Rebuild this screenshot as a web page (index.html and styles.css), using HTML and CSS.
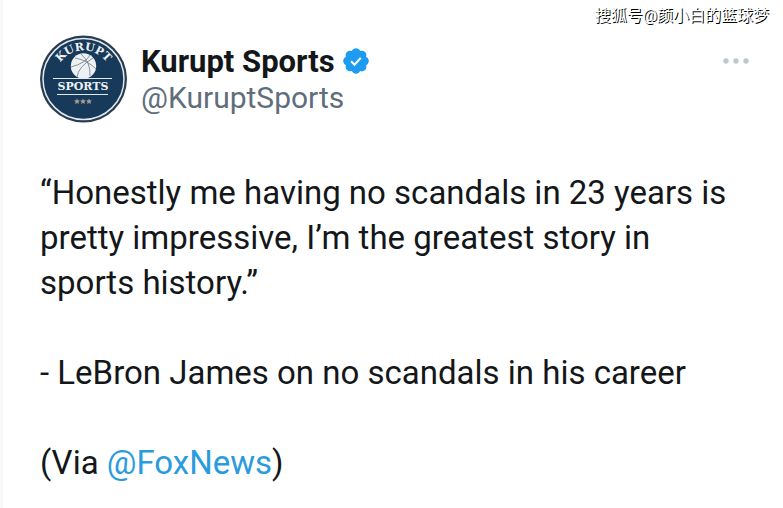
FILE: index.html
```html
<!DOCTYPE html>
<html lang="en">
<head>
    <meta charset="UTF-8">
    <meta name="viewport" content="width=device-width, initial-scale=1.0">
    <title>Kurupt Sports</title>
    <link rel="stylesheet" href="styles.css">
</head>
<body>

<article class="post">
    <header class="post-header">
        <svg class="avatar" viewBox="0 0 88 88" role="img" aria-label="Kurupt Sports logo">
            <defs>
                <path id="arc" d="M15 44 A28.500 28.500 0 0 1 72 44"/>
            </defs>
            <circle cx="43.500" cy="44" r="43.500" fill="#2b3b4c"/>
            <circle cx="43.500" cy="44" r="40.500" fill="#17395a" stroke="#dfe9f1" stroke-width="1.500"/>
            <text class="logo-arc"><textPath href="#arc" startOffset="50%" text-anchor="middle">KURUPT</textPath></text>
            <circle cx="43.500" cy="31" r="12.700" fill="#eef1f3"/>
            <g fill="none" stroke="#6b7986" stroke-width="0.800">
                <path d="M31 32Q46 28 50 20"/>
                <path d="M37 42Q38 32 53 23"/>
                <path d="M41 19Q51 28 50 41"/>
                <path d="M35 23Q47 25 56 34"/>
            </g>
            <path d="M14 44H73V59H14z" fill="#17395a"/>
            <path d="M13 43.500H72M17 59.500H68" stroke="#dfe9f1" stroke-width="1.200"/>
            <text class="logo-name" x="43" y="55" text-anchor="middle">SPORTS</text>
            <g fill="#a39c91">
                <path d="M37 63.500l.9 1.700 2 .3-1.400 1.400.3 2-1.800-.9-1.800.9.3-2-1.400-1.400 2-.3z"/>
                <path d="M43 63.500l.9 1.700 2 .3-1.400 1.400.3 2-1.800-.9-1.800.9.3-2-1.400-1.400 2-.3z"/>
                <path d="M49 63.500l.9 1.700 2 .3-1.400 1.400.3 2-1.800-.9-1.800.9.3-2-1.400-1.400 2-.3z"/>
            </g>
        </svg>
        <div class="author">
            <div class="name-row">
                <span class="name">Kurupt Sports</span>
                <svg class="verified" viewBox="0 0 22 22" role="img" aria-label="Verified">
                    <path fill="#1d9bf0" d="M20.396 11c-.018-.646-.215-1.275-.57-1.816-.354-.54-.852-.972-1.438-1.246.223-.607.27-1.264.14-1.897-.131-.634-.437-1.218-.882-1.687-.47-.445-1.053-.75-1.687-.882-.633-.13-1.290-.083-1.897.14-.273-.587-.704-1.086-1.245-1.440S11.647 1.620 11 1.604c-.646.017-1.273.213-1.813.568s-.969.854-1.240 1.440c-.608-.223-1.267-.272-1.902-.14-.635.13-1.220.436-1.690.882-.445.47-.749 1.055-.878 1.688-.13.633-.08 1.290.144 1.896-.587.274-1.087.705-1.443 1.245-.356.54-.555 1.170-.574 1.817.02.647.218 1.276.574 1.817.356.54.856.972 1.443 1.245-.224.606-.274 1.263-.144 1.896.13.634.433 1.218.877 1.688.47.443 1.054.747 1.687.878.633.132 1.290.084 1.897-.136.274.586.705 1.084 1.246 1.439.54.354 1.170.551 1.816.569.647-.016 1.276-.213 1.817-.567s.972-.854 1.245-1.440c.604.239 1.266.296 1.903.164.636-.132 1.220-.447 1.680-.907.46-.46.776-1.044.908-1.681s.075-1.299-.165-1.903c.586-.274 1.084-.705 1.439-1.246.354-.54.551-1.170.569-1.816z"/>
                    <path fill="none" stroke="#fff" stroke-width="1.500" d="M7.400 11.200l2.500 2.500 4.600-5"/>
                </svg>
            </div>
            <a class="handle" href="#">@KuruptSports</a>
        </div>
        <button class="more" aria-label="More">
            <svg viewBox="0 0 26 6" width="26" height="6" fill="#bfc7ce">
                <circle cx="3" cy="3" r="2.700"/>
                <circle cx="13" cy="3" r="2.700"/>
                <circle cx="23" cy="3" r="2.700"/>
            </svg>
        </button>
    </header>

    <div class="post-text">
        <p>“Honestly me having no scandals in 23 years is pretty impressive, I’m the greatest story in sports history.”</p>
        <p>- LeBron James on no scandals in his career</p>
        <p>(Via <a href="#">@FoxNews</a>)</p>
    </div>
</article>

<div class="watermark" lang="zh">搜狐号@颜小白的篮球梦</div>

</body>
</html>
```

FILE: styles.css
```css
body {
    margin: 0;
    background-color: #fff;
    color: #14171a;
    font-family: Roboto, "Noto Sans", sans-serif;
}
.post {
    box-sizing: border-box;
    min-height: 100vh;
    padding: 35px 34px 20px 37px;
    border-left: 3px solid #f9f9f9;
}
.post-header {
    display: flex;
    align-items: flex-start;
}
.avatar {
    width: 88px;
    height: 88px;
    flex: none;
}
.logo-arc,
.logo-name {
    fill: #eef1f3;
    font-family: "DejaVu Serif", serif;
    font-weight: bold;
    font-size: 11px;
}
.author {
    margin-left: 13px;
    padding-top: 8px;
}
.name-row {
    display: flex;
    align-items: center;
    gap: 6px;
    height: 36px;
}
.name {
    font-size: 31px;
    font-weight: bold;
}
.verified {
    width: 30px;
    height: 30px;
}
.handle {
    display: block;
    color: #5f6e7a;
    font-size: 30px;
    line-height: 38px;
    text-decoration: none;
}
.more {
    display: flex;
    margin-left: auto;
    margin-top: 23px;
    padding: 0;
    border: none;
    background: none;
    cursor: pointer;
}
.post-text {
    margin-top: 47px;
    font-size: 33px;
    line-height: 45px;
}
.post-text p {
    margin: 0 0 45px;
}
.post-text p:last-child {
    margin-bottom: 0;
}
.post-text a {
    color: #2b9be0;
    text-decoration: none;
}
.watermark {
    position: absolute;
    top: 4px;
    right: 14px;
    color: #fff;
    font-family: Roboto, "Noto Sans CJK SC", sans-serif;
    font-size: 16px;
    line-height: 24px;
    text-shadow: 1px 1px 0 #000;
}
```
